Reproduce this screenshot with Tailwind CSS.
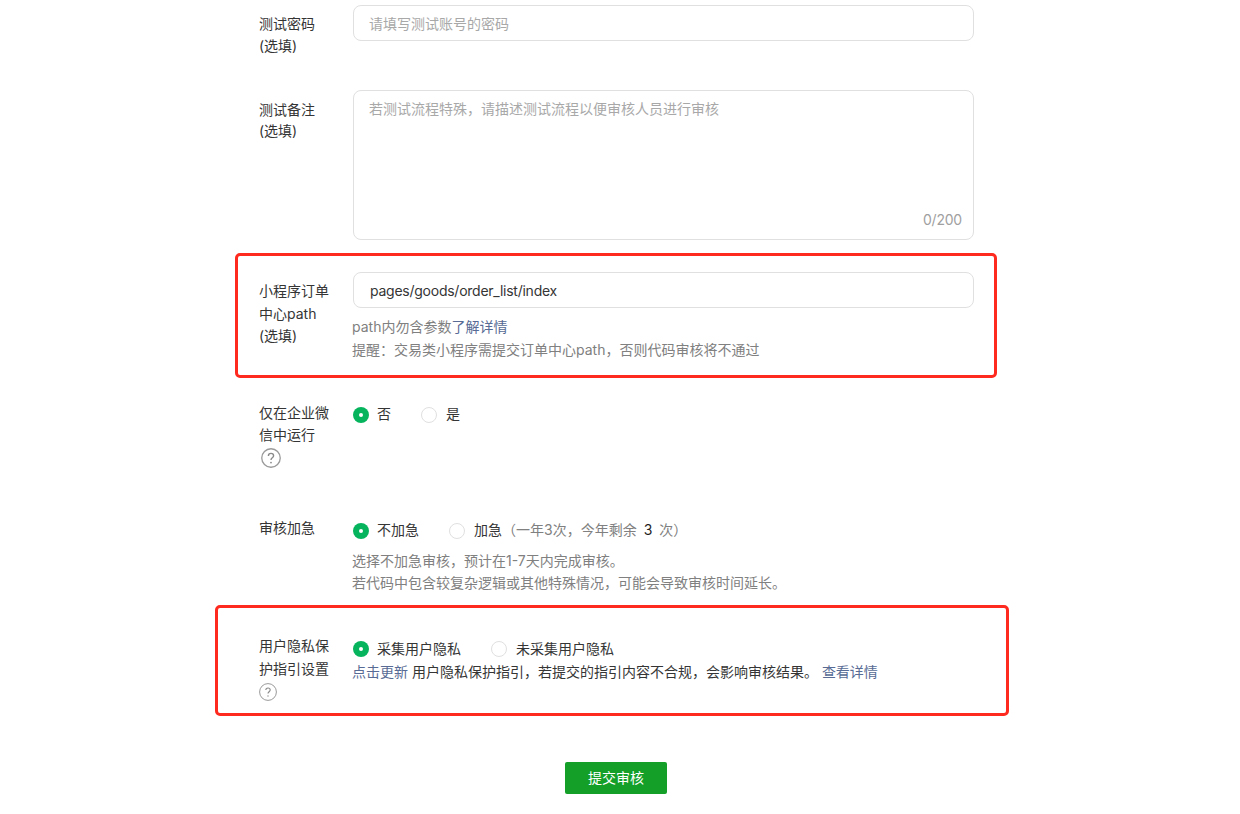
<!DOCTYPE html>
<html lang="zh-CN">
  <head>
    <meta charset="UTF-8" />
    <title>提交审核</title>
    <script src="https://cdn.jsdelivr.net/npm/@tailwindcss/browser@4"></script>
  </head>
  <body class="bg-white h-[814px] overflow-hidden relative font-['Inter','Noto_Sans_CJK_SC',sans-serif] text-[14px] leading-[22px] text-[#353535]">
    <!-- red annotation boxes -->
    <div class="absolute left-[235px] top-[253px] w-[762px] h-[125px] border-[3px] border-[#ff2a1f] rounded-[5px]"></div>
    <div class="absolute left-[215px] top-[605px] w-[794px] h-[111px] border-[3px] border-[#ff2a1f] rounded-[5px]"></div>

    <form class="ml-[259px] w-[715px] pt-[5px]">
      <div class="flex h-[85px]">
        <label class="w-[94px] pt-[8px]">测试密码<br />(选填)</label>
        <input type="text" placeholder="请填写测试账号的密码" class="w-[621px] h-[36px] pl-[15px] pr-[16px] border border-[#e0e0e0] rounded-[8px] outline-none placeholder:text-[#a8a8a8]" />
      </div>

      <div class="flex h-[182px]">
        <label class="w-[94px] pt-[9px] leading-[21px]">测试备注<br />(选填)</label>
        <div class="relative w-[621px] h-[150px] border border-[#e0e0e0] rounded-[8px] px-[15px] py-[7px] text-[#a8a8a8]">
          若测试流程特殊，请描述测试流程以便审核人员进行审核
          <span class="absolute right-[11px] bottom-[8px] tracking-[-0.2px] text-[#a0a0a0]">0/200</span>
        </div>
      </div>

      <div class="flex h-[129px]">
        <label class="w-[94px] pt-[8px] leading-[22.5px]">小程序订单<br />中心path<br />(选填)</label>
        <div class="w-[621px]">
          <input type="text" value="pages/goods/order_list/index" class="w-full h-[36px] px-[16px] border border-[#e0e0e0] rounded-[8px] outline-none tracking-[-0.25px] text-[#353535]" />
          <p class="mt-[8px] -ml-[1px] text-[#808080]">path内勿含参数<a class="text-[#576b95]">了解详情</a></p>
          <p class="mt-[1px] -ml-[1px] text-[#808080]">提醒：交易类小程序需提交订单中心path，否则代码审核将不通过</p>
        </div>
      </div>

      <div class="flex h-[118px]">
        <div class="w-[94px] pt-[1px]">
          <label class="block w-[72px]">仅在企业微信中运行</label>
          <svg class="ml-[2px] mt-[2px]" width="20" height="20" viewBox="0 0 20 20" fill="none"><circle cx="10" cy="10" r="9.25" stroke="#9a9a9a" stroke-width="1.3" /><path d="M7.4 7.9c0-1.5 1.1-2.5 2.6-2.5s2.6 1 2.6 2.3c0 2-2.6 2.1-2.6 4.2" stroke="#8a8a8a" stroke-width="1.4" /><circle cx="10" cy="14.6" r="0.9" fill="#8a8a8a" /></svg>
        </div>
        <div class="flex items-center h-[22px] mt-[2px]">
          <span class="mt-[2px] w-[16px] h-[16px] rounded-full bg-[#07b45e] flex items-center justify-center"><span class="w-[4px] h-[4px] rounded-full bg-white"></span></span>
          <span class="ml-[8px]">否</span>
          <span class="mt-[2px] ml-[30px] w-[16px] h-[16px] rounded-full border border-[#e0e0e0]"></span>
          <span class="ml-[9px]">是</span>
        </div>
      </div>

      <div class="flex h-[113px]">
        <label class="w-[94px] -mt-[2px]">审核加急</label>
        <div class="w-[621px]">
          <div class="flex items-center h-[22px]">
            <span class="mt-[2px] w-[16px] h-[16px] rounded-full bg-[#07b45e] flex items-center justify-center"><span class="w-[4px] h-[4px] rounded-full bg-white"></span></span>
            <span class="ml-[8px]">不加急</span>
            <span class="mt-[2px] ml-[30px] w-[16px] h-[16px] rounded-full border border-[#e0e0e0]"></span>
            <span class="ml-[9px]">加急</span>
            <span class="text-[#808080]">（一年3次，今年剩余<span class="mx-[7px] text-[#1f1f1f]">3</span>次）</span>
          </div>
          <p class="mt-[9px] -ml-[1px] text-[#808080]">选择不加急审核，预计在1-7天内完成审核。</p>
          <p class="-ml-[1px] text-[#808080]">若代码中包含较复杂逻辑或其他特殊情况，可能会导致审核时间延长。</p>
        </div>
      </div>

      <div class="flex h-[130px]">
        <div class="w-[94px] pt-[2px]">
          <label class="block w-[72px] leading-[23px]">用户隐私保护指引设置</label>
          <svg class="mt-[3px]" width="18" height="18" viewBox="0 0 18 18" fill="none"><circle cx="9" cy="9" r="8.4" stroke="#9a9a9a" stroke-width="1" /><path d="M6.8 7.1c0-1.3.9-2.1 2.2-2.1s2.2.8 2.2 2c0 1.7-2.2 1.8-2.2 3.6" stroke="#8a8a8a" stroke-width="1.1" /><circle cx="9" cy="13" r="0.7" fill="#8a8a8a" /></svg>
        </div>
        <div class="w-[621px]">
          <div class="flex items-center h-[22px] mt-[6px]">
            <span class="w-[16px] h-[16px] rounded-full bg-[#07b45e] flex items-center justify-center"><span class="w-[4px] h-[4px] rounded-full bg-white"></span></span>
            <span class="ml-[8px]">采集用户隐私</span>
            <span class="ml-[30px] w-[16px] h-[16px] rounded-full border border-[#e0e0e0]"></span>
            <span class="ml-[9px]">未采集用户隐私</span>
          </div>
          <p class="mt-[1px] -ml-[1px]"><a class="text-[#576b95]">点击更新</a> 用户隐私保护指引，若提交的指引内容不合规，会影响审核结果。 <a class="text-[#576b95]">查看详情</a></p>
        </div>
      </div>
    </form>

    <div class="ml-[565px]">
      <button type="button" class="w-[102px] h-[32px] bg-[#14a028] rounded-[2px] text-white">提交审核</button>
    </div>
  </body>
</html>
